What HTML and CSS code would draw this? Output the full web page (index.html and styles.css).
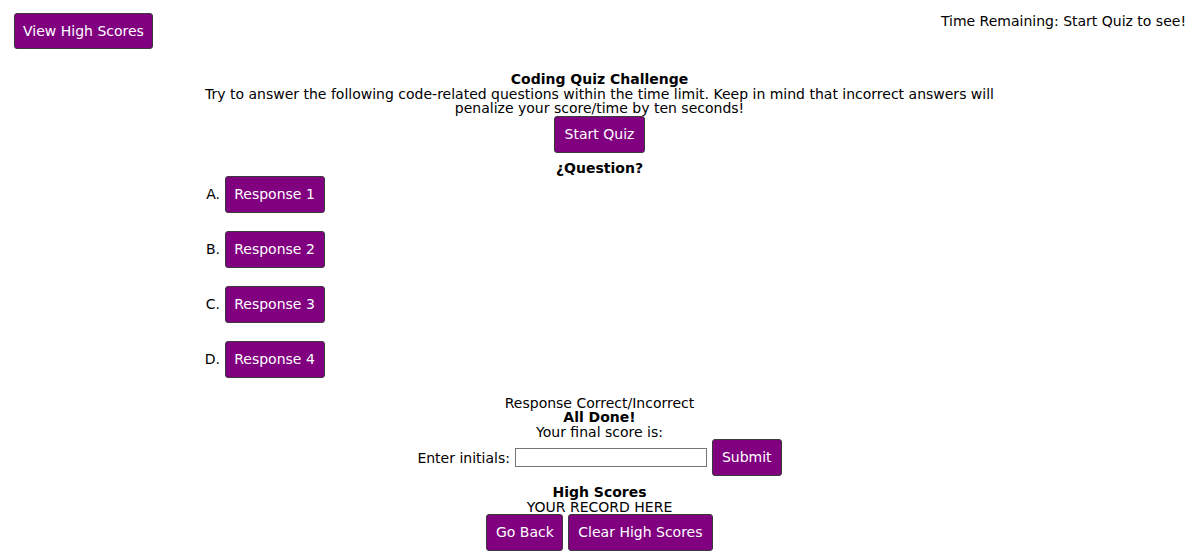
FILE: index.html
```html
<!DOCTYPE html>
<html lang="en">
<head>
<meta charset="utf-8">
<title>Coding Quiz Challenge</title>
<link rel="stylesheet" href="styles.css">
</head>
<body>
<header class="top-bar">
  <button class="btn btn-view">View High Scores</button>
  <div class="timer">Time Remaining: Start Quiz to see!</div>
</header>
<main class="quiz">
  <section class="intro">
    <h1 class="title">Coding Quiz Challenge</h1>
    <p class="desc">Try to answer the following code-related questions within the time limit. Keep in mind that incorrect answers will penalize your score/time by ten seconds!</p>
    <button class="btn">Start Quiz</button>
  </section>
  <section class="question">
    <h2 class="q-title">¿Question?</h2>
    <ol class="answers">
      <li><button class="btn">Response 1</button></li>
      <li><button class="btn">Response 2</button></li>
      <li><button class="btn">Response 3</button></li>
      <li><button class="btn">Response 4</button></li>
    </ol>
  </section>
  <section class="done">
    <p class="line">Response Correct/Incorrect</p>
    <h2 class="line bold">All Done!</h2>
    <p class="line">Your final score is:</p>
    <form class="initials-row">
      <label class="initials-label" for="initials">Enter initials:</label>
      <input class="initials-input" id="initials" type="text">
      <button class="btn btn-submit" type="button">Submit</button>
    </form>
  </section>
  <section class="scores">
    <h2 class="line bold">High Scores</h2>
    <p class="line">YOUR RECORD HERE</p>
    <div class="score-actions">
      <button class="btn btn-back">Go Back</button>
      <button class="btn btn-clear">Clear High Scores</button>
    </div>
  </section>
</main>
</body>
</html>
```
FILE: styles.css
```css
* { box-sizing: border-box; }

html, body {
  margin: 0;
  padding: 0;
  background: #fff;
}

body {
  font-family: "DejaVu Sans", Verdana, sans-serif;
  font-size: 14px;
  color: #000;
}

.top-bar {
  display: flex;
  justify-content: space-between;
  align-items: flex-start;
  padding: 13px 13px 0 14px;
}

.timer {
  line-height: 16px;
}

.btn {
  font-family: "DejaVu Sans", Verdana, sans-serif;
  font-size: 14px;
  line-height: 17px;
  color: #fff;
  background: #800080;
  border: 1px solid #3a3a3a;
  border-radius: 3px;
  padding: 9px 10px;
  margin: 0;
  white-space: nowrap;
  cursor: pointer;
}

.btn-view {
  padding: 8.5px 0;
  width: 139px;
  text-align: center;
}

.btn-submit {
  padding-left: 9px;
  padding-right: 9px;
}

.btn-back {
  padding-left: 8.5px;
  padding-right: 8.5px;
}

.btn-clear {
  padding-left: 9px;
  padding-right: 9px;
}

.quiz {
  width: 800px;
  margin: 23px auto 0;
  display: flex;
  flex-direction: column;
  align-items: center;
  text-align: center;
}

.intro {
  display: flex;
  flex-direction: column;
  align-items: center;
}

.title {
  margin: 0;
  font-size: 14px;
  font-weight: bold;
  line-height: 14.5px;
}

.desc {
  margin: 0;
  line-height: 14.5px;
}

.question {
  width: 100%;
  margin-top: 8.5px;
}

.q-title {
  margin: 0;
  font-size: 14px;
  font-weight: bold;
  line-height: 14.5px;
}

.answers {
  list-style: upper-alpha;
  margin: 0;
  padding: 0 0 0 25px;
  text-align: left;
  display: flex;
  flex-direction: column;
  gap: 18px;
}

.answers li {
  display: list-item;
}

.answers .btn {
  width: 100px;
  padding-left: 0;
  padding-right: 0;
  text-align: center;
}

.done {
  margin-top: 18px;
  display: flex;
  flex-direction: column;
  align-items: center;
}

.line {
  margin: 0;
  font-size: 14px;
  line-height: 14.5px;
  font-weight: normal;
}

.line.bold {
  font-weight: bold;
}

.initials-row {
  display: flex;
  align-items: center;
  gap: 5px;
  margin: 0;
}

.initials-label {
  line-height: 16px;
}

.initials-input {
  width: 192px;
  height: 19px;
  border: 1px solid #767676;
  padding: 0 2px;
  font-family: "DejaVu Sans", Verdana, sans-serif;
  font-size: 13px;
  margin: 0;
}

.scores {
  margin-top: 9px;
  display: flex;
  flex-direction: column;
  align-items: center;
}

.score-actions {
  display: flex;
  gap: 5px;
}
```
